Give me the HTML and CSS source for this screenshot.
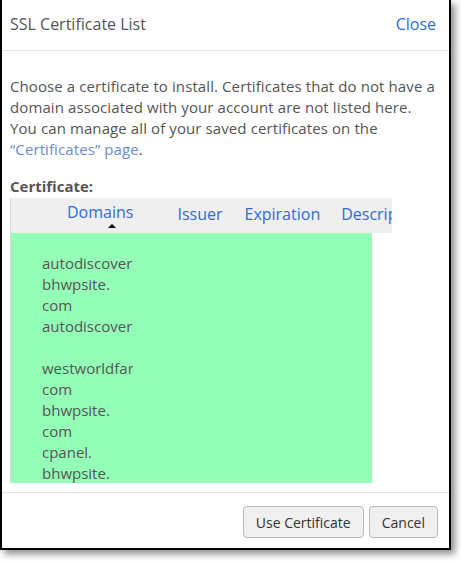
FILE: index.html
```html
<!DOCTYPE html>
<html>
<head>
<meta charset="utf-8">
<link rel="stylesheet" href="styles.css">
</head>
<body>
<div class="dialog">
  <div class="dialog-header">
    <span class="title">SSL Certificate List</span>
    <a class="close">Close</a>
  </div>
  <div class="dialog-body">
    <p class="intro">Choose a certificate to install. Certificates that do not have a domain associated with your account are not listed here. You can manage all of your saved certificates on the <a class="link">“Certificates” page</a>.</p>
    <div class="label">Certificate:</div>
    <div class="table">
      <div class="thead">
        <span class="th th-domains">Domains<span class="sort-arrow"></span></span>
        <span class="th th-issuer">Issuer</span>
        <span class="th th-exp">Expiration</span>
        <span class="th th-desc">Description</span>
      </div>
      <div class="tbody">
        <div class="domains">
          <div class="dline">autodiscover.bhwpsite.com</div>
          <div class="dline">bhwpsite.</div>
          <div class="dline">com</div>
          <div class="dline">autodiscover.westworldfarm.com</div>
          <div class="dline">&nbsp;</div>
          <div class="dline">westworldfarm.</div>
          <div class="dline">com</div>
          <div class="dline">bhwpsite.</div>
          <div class="dline">com</div>
          <div class="dline">cpanel.</div>
          <div class="dline">bhwpsite.</div>
          <div class="dline">com</div>
        </div>
      </div>
    </div>
  </div>
  <div class="dialog-footer">
    <button class="btn">Use Certificate</button>
    <button class="btn">Cancel</button>
  </div>
</div>
</body>
</html>
```

FILE: styles.css
```css
html, body {
  margin: 0;
  padding: 0;
  background: #ffffff;
}
body {
  font-family: "Open Sans", "Liberation Sans", sans-serif;
  width: 461px;
  height: 562px;
  overflow: hidden;
}
.dialog {
  width: 447px;
  height: 548px;
  border-left: 2px solid #000;
  border-right: 2px solid #000;
  border-bottom: 2px solid #000;
  background: #fff;
  box-shadow: 4px 4px 7px rgba(0, 0, 0, 0.45);
  display: flex;
  flex-direction: column;
}
.dialog-header {
  height: 51px;
  box-sizing: border-box;
  border-bottom: 1px solid #e3e3e3;
  display: flex;
  align-items: center;
  justify-content: space-between;
  padding: 0 13px 3px 8px;
}
.title {
  font-size: 16px;
  color: #555;
}
.close {
  font-size: 16px;
  color: #2f6bd7;
}
.dialog-body {
  padding: 25px 8px 0 8px;
  height: 442px;
  box-sizing: border-box;
  border-bottom: 1px solid #e3e3e3;
}
.intro {
  margin: 0;
  width: 428px;
  font-size: 15px;
  line-height: 21px;
  letter-spacing: 0.1px;
  color: #555;
}
.link {
  color: #6a8dc8;
}
.label {
  margin-top: 16px;
  margin-bottom: 1px;
  font-size: 15px;
  line-height: 21px;
  font-weight: bold;
  color: #555;
}
.table {
  width: 381px;
  border-left: 1px solid #d8d8d8;
}
.thead {
  background: #efefef;
  height: 35px;
  display: flex;
  align-items: flex-start;
  font-size: 16px;
  color: #2f6bd7;
  white-space: nowrap;
  overflow: hidden;
}
.th {
  position: relative;
  padding-top: 6px;
  line-height: 20px;
}
.th-domains {
  margin-left: 56px;
  padding-top: 4px;
}
.th-issuer {
  margin-left: 44px;
}
.th-exp {
  margin-left: 22px;
}
.th-desc {
  margin-left: 21px;
}
.sort-arrow {
  position: absolute;
  left: 41px;
  top: 26px;
  width: 0;
  height: 0;
  border-left: 4px solid transparent;
  border-right: 4px solid transparent;
  border-bottom: 4px solid #000;
}
.tbody {
  width: 361px;
  height: 250px;
  background: #94fdb6;
  overflow: hidden;
}
.domains {
  margin-left: 31px;
  padding-top: 20px;
  width: 91px;
  overflow: hidden;
  font-size: 15px;
  line-height: 21px;
  color: #555;
}
.dline {
  white-space: nowrap;
}
.dialog-footer {
  flex: 1;
  display: flex;
  justify-content: flex-end;
  align-items: flex-start;
  gap: 5px;
  padding: 13px 11px 0 0;
}
.btn {
  font-family: "Open Sans", "Liberation Sans", sans-serif;
  font-size: 14px;
  color: #333;
  background: #f0f0f0;
  border: 1px solid #b9b9b9;
  border-radius: 4px;
  height: 32px;
  padding: 0 12px;
  margin: 0;
}
```
